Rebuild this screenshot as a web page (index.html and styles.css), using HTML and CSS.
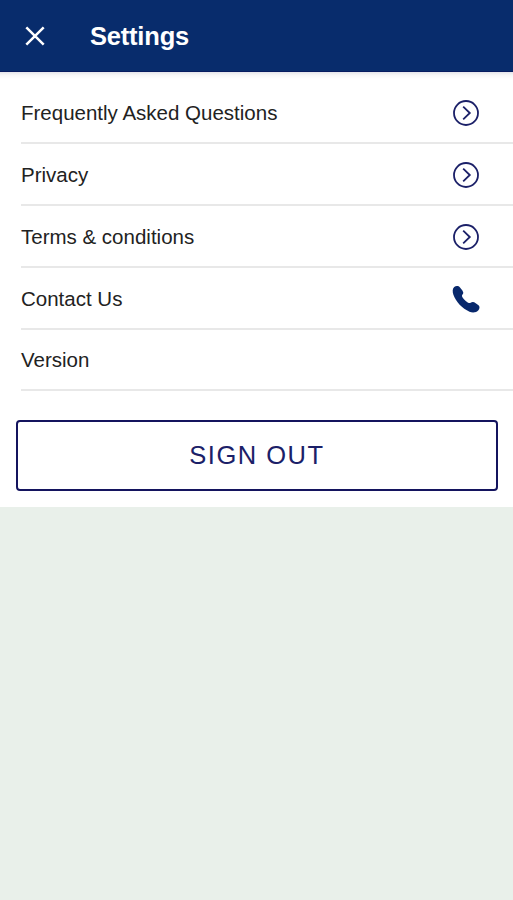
FILE: index.html
```html
<!DOCTYPE html>
<html lang="en">
<head>
<meta charset="utf-8">
<title>Settings</title>
<link rel="stylesheet" href="styles.css">
</head>
<body>
<header class="bar">
  <svg class="close" viewBox="0 0 20 20"><path d="M1.3 1.3L18.7 18.7M18.7 1.3L1.3 18.7"/></svg>
  <h1 class="title">Settings</h1>
</header>
<main class="panel">
  <ul class="list">
    <li class="row"><span>Frequently Asked Questions</span><svg class="icon" viewBox="0 0 28 28"><circle cx="14" cy="14" r="12"/><path d="M11.2 7.6L17.8 14L11.2 20.4"/></svg></li>
    <li class="row"><span>Privacy</span><svg class="icon" viewBox="0 0 28 28"><circle cx="14" cy="14" r="12"/><path d="M11.2 7.6L17.8 14L11.2 20.4"/></svg></li>
    <li class="row"><span>Terms &amp; conditions</span><svg class="icon" viewBox="0 0 28 28"><circle cx="14" cy="14" r="12"/><path d="M11.2 7.6L17.8 14L11.2 20.4"/></svg></li>
    <li class="row"><span>Contact Us</span><svg class="icon phone" viewBox="0 0 28 28"><path d="M2.2 2C4 .6 6.6 .8 8 2.4C9.6 4.2 11.3 6.2 11.3 7.8C11.3 9.4 9.7 10 10 11.2C10.8 13.4 14.8 17.4 17 18C18.5 18.4 19.2 16.8 20.9 16.9C22.6 17 24.8 18.8 26.5 20.3C27.9 21.6 27.8 23.6 26.4 25.2C24.4 27.5 20.8 28 17.5 26.7C10.4 23.7 3.7 16.6 1.4 9.8C.4 6.8 .3 3.6 2.2 2Z"/></svg></li>
    <li class="row"><span>Version</span></li>
  </ul>
  <button class="signout">SIGN OUT</button>
</main>
</body>
</html>
```
FILE: styles.css
```css
* { box-sizing: border-box; }
body {
  margin: 0;
  min-height: 900px;
  background: #e9f0ea;
  color: #222;
  font-family: "Liberation Sans", Arial, sans-serif;
}
.bar {
  display: flex;
  align-items: center;
  height: 72px;
  padding: 1px 0 0 25px;
  border-bottom: 1px solid #071c60;
  background: #082c6c;
  color: #fff;
}
.close {
  width: 20px;
  height: 20px;
  margin-right: 45px;
  fill: none;
  stroke: #fff;
  stroke-width: 2.5;
}
.title { margin: 0; font-size: 25.5px; line-height: 30px; letter-spacing: -0.2px; }
.panel {
  height: 435px;
  padding-top: 10.4px;
  background: linear-gradient(#e4e4ea, #f7f7f7 3px, #fff 7px);
}
.list { margin: 0 0 0 21px; padding: 0; list-style: none; }
.row {
  display: flex;
  align-items: center;
  justify-content: space-between;
  height: 61.8px;
  padding: 2px 33px 0 0;
  border-bottom: 2px solid #e8e8e8;
  font-size: 20.5px;
}
.icon { width: 28px; height: 28px; fill: none; stroke: #1b2068; stroke-width: 1.8; }
.phone { fill: #08286c; stroke: none; }
.signout {
  display: block;
  width: 482px;
  height: 71px;
  margin: 28.6px 0 0 16px;
  padding: 0;
  border: 2px solid #14145e;
  border-radius: 4px;
  background: #fff;
  color: #1b2068;
  font-family: inherit;
  font-size: 25.5px;
  letter-spacing: 1.5px;
}
```
